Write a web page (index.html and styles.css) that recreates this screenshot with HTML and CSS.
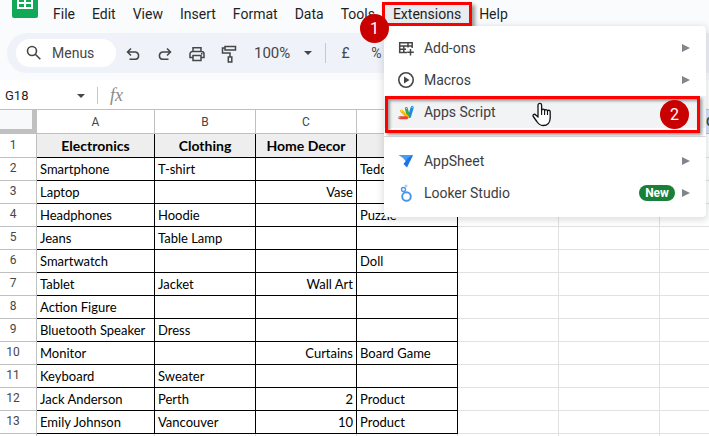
FILE: index.html
```html
<!DOCTYPE html>
<html lang="en">
<head>
  <meta charset="UTF-8">
  <meta name="viewport" content="width=device-width, initial-scale=1.0">
  <title>Spreadsheet</title>
  <link rel="stylesheet" href="styles.css">
</head>
<body>
  <header class="header">
    <div class="top-row">
      <svg class="logo" width="26" height="18" viewBox="0 0 26 18">
        <path fill="#0fa958" d="M0 0h26v16a2 2 0 0 1-2 2H2a2 2 0 0 1-2-2z"/>
        <path fill="#fff" d="M5 0h16v9H5z"/>
        <path fill="#0fa958" d="M7 0h5v2H7zM14 0h5v2h-5zM7 4h5v3H7zM14 4h5v3h-5z"/>
      </svg>
      <nav class="menubar">
        <button>File</button>
        <button>Edit</button>
        <button>View</button>
        <button>Insert</button>
        <button>Format</button>
        <button>Data</button>
        <button>Tools</button>
        <div class="menu-holder">
          <button class="active">Extensions</button>
          <span class="step step-one">1</span>
          <div class="dropdown">
            <button class="item">
              <svg width="18" height="18" viewBox="0 0 18 18" fill="none" stroke="#444746" stroke-width="1.500">
                <path d="M10 13.500H2.700V3.700h12.500V9M2.700 7h12.500M2.700 10.200H9M6.800 7v6.500M11 3.700V8.500M13.500 10v6.500M10.200 13.300h6.600"/>
              </svg>
              <span class="label">Add-ons</span>
              <span class="arrow"></span>
            </button>
            <button class="item">
              <svg width="18" height="18" viewBox="0 0 18 18">
                <circle cx="9" cy="9" r="7.200" fill="none" stroke="#444746" stroke-width="1.600"/>
                <path fill="#444746" d="M7 5.500v7L12.500 9z"/>
              </svg>
              <span class="label">Macros</span>
              <span class="arrow"></span>
            </button>
            <button class="item selected">
              <svg width="18" height="18" viewBox="0 0 18 18" fill="none" stroke-linecap="round" stroke-width="3">
                <path stroke="#1e88e5" d="M12.500 13.500l2.700-9"/>
                <path stroke="#34a853" d="M11.500 13.500L9.300 5.500"/>
                <path stroke="#fbbc04" d="M10.500 14L4.500 8"/>
                <path stroke="#ea4335" d="M9.500 14.700H2.800"/>
                <path stroke="#fff" stroke-width="1" d="M15.200 4.500v0M9.300 5.500v0M4.500 8v0M2.800 14.700v0"/>
              </svg>
              <span class="label">Apps Script</span>
              <span class="step step-two">2</span>
              <svg class="cursor" width="20" height="25" viewBox="0 0 20 25">
                <path fill="#fff" stroke="#111" stroke-width="1.300" stroke-linejoin="round" d="M6 15V3.200a1.800 1.800 0 0 1 3.600 0V8.500c0-1.800 3-1.800 3 .3 0-1.700 2.900-1.600 2.900.4 0-1.400 2.700-1.300 2.700.6V16c0 4.500-2.700 7.500-7 7.500-3.500 0-5-1.500-6.700-4.500L1.300 14.500c-1-1.800 1-3 2.500-1.500z"/>
                <path fill="none" stroke="#111" stroke-width="1.100" d="M9.600 8v5M12.600 8.500V13M15.500 9v4"/>
              </svg>
            </button>
            <hr>
            <button class="item">
              <svg width="18" height="18" viewBox="0 0 18 18">
                <path fill="#4a9bf0" d="M1.500 3h14.500l-3 6H8.500L6 6z"/>
                <path fill="#1a73e8" d="M16 3l-6 12.500L6.500 12 11 6z"/>
              </svg>
              <span class="label">AppSheet</span>
              <span class="arrow"></span>
            </button>
            <button class="item">
              <svg width="18" height="18" viewBox="0 0 18 18" fill="none" stroke="#4794ec">
                <circle cx="9.500" cy="12.500" r="4.300" stroke-width="1.900"/>
                <circle cx="6.500" cy="5.500" r="2" stroke-width="1.300"/>
                <circle cx="9" cy="2" r="1" stroke="#8fc1f7"/>
              </svg>
              <span class="label">Looker Studio</span>
              <span class="new">New</span>
              <span class="arrow"></span>
            </button>
          </div>
        </div>
        <button>Help</button>
      </nav>
    </div>
    <div class="toolbar">
      <button class="search">
        <svg width="16" height="16" viewBox="0 0 16 16" fill="none" stroke="#444746" stroke-width="1.600">
          <circle cx="6" cy="6" r="4.500"/>
          <path d="M9.300 9.300l5 5"/>
        </svg>
        Menus
      </button>
      <div class="tools">
        <button aria-label="Undo">
          <svg width="16" height="16" viewBox="0 0 16 16" fill="none" stroke="#444746" stroke-width="1.500">
            <path d="M3 6h7.500a3.700 3.700 0 0 1 0 7.300H4.500M6 2.500L2.500 6 6 9.500"/>
          </svg>
        </button>
        <button aria-label="Redo">
          <svg width="16" height="16" viewBox="0 0 16 16" fill="none" stroke="#444746" stroke-width="1.500">
            <path d="M13 6H5.500a3.700 3.700 0 0 0 0 7.300h6M10 2.500L13.500 6 10 9.500"/>
          </svg>
        </button>
        <button aria-label="Print">
          <svg width="16" height="16" viewBox="0 0 16 16" fill="none" stroke="#444746" stroke-width="1.500">
            <path d="M4 5V1.700h8V5M4 11.500H1V8a2.500 2.500 0 0 1 2.500-2.500h9A2.500 2.500 0 0 1 15 8v3.500h-3M4 9.500h8v5H4zM12 7.700h1.500"/>
          </svg>
        </button>
        <button aria-label="Paint format">
          <svg width="16" height="18" viewBox="0 0 16 18" fill="none" stroke="#444746" stroke-width="1.500">
            <path d="M4 1.500h10.500v3.500H4zM4 3H1.500v5h7.500v4M7.300 12h3.500v5H7.300z"/>
          </svg>
        </button>
      </div>
      <button class="zoom">100% <span class="caret"></span></button>
      <span class="divider"></span>
      <button class="format">£</button>
      <button class="format">%</button>
    </div>
  </header>

  <div class="formula-bar">
    <button class="cell-name">G18 <span class="caret"></span></button>
    <span class="divider"></span>
    <span class="fx">fx</span>
  </div>

  <main class="sheet">
    <table>
      <colgroup>
        <col class="col-num">
        <col class="col-a">
        <col span="6">
      </colgroup>
      <thead>
        <tr><th class="corner"></th><th>A</th><th>B</th><th>C</th><th>D</th><th>E</th><th>F</th><th class="current">G</th></tr>
      </thead>
      <tbody>
        <tr class="titles"><th>1</th><td>Electronics</td><td>Clothing</td><td>Home Decor</td><td>Toys</td><td></td><td></td><td></td></tr>
        <tr><th>2</th><td>Smartphone</td><td>T-shirt</td><td></td><td>Teddy Bear</td><td></td><td></td><td></td></tr>
        <tr><th>3</th><td>Laptop</td><td></td><td>Vase</td><td></td><td></td><td></td><td></td></tr>
        <tr><th>4</th><td>Headphones</td><td>Hoodie</td><td></td><td>Puzzle</td><td></td><td></td><td></td></tr>
        <tr><th>5</th><td>Jeans</td><td>Table Lamp</td><td></td><td></td><td></td><td></td><td></td></tr>
        <tr><th>6</th><td>Smartwatch</td><td></td><td></td><td>Doll</td><td></td><td></td><td></td></tr>
        <tr><th>7</th><td>Tablet</td><td>Jacket</td><td>Wall Art</td><td></td><td></td><td></td><td></td></tr>
        <tr><th>8</th><td>Action Figure</td><td></td><td></td><td></td><td></td><td></td><td></td></tr>
        <tr><th>9</th><td>Bluetooth Speaker</td><td>Dress</td><td></td><td></td><td></td><td></td><td></td></tr>
        <tr><th>10</th><td>Monitor</td><td></td><td>Curtains</td><td>Board Game</td><td></td><td></td><td></td></tr>
        <tr><th>11</th><td>Keyboard</td><td>Sweater</td><td></td><td></td><td></td><td></td><td></td></tr>
        <tr><th>12</th><td>Jack Anderson</td><td>Perth</td><td>2</td><td>Product</td><td></td><td></td><td></td></tr>
        <tr><th>13</th><td>Emily Johnson</td><td>Vancouver</td><td>10</td><td>Product</td><td></td><td></td><td></td></tr>
        <tr class="blank"><th></th><td></td><td></td><td></td><td></td><td></td><td></td><td></td></tr>
      </tbody>
    </table>
  </main>
</body>
</html>
```
FILE: styles.css
```css
* {
  box-sizing: border-box;
}
body {
  margin: 0;
  height: 100vh;
  overflow: hidden;
  font-family: Roboto, "Liberation Sans", sans-serif;
  font-size: 14px;
  color: #1f1f1f;
  background-color: #fff;
}
button {
  padding: 0;
  border: none;
  background: none;
  font: inherit;
  color: inherit;
  cursor: pointer;
}

/* header */
.header {
  background-color: #f9fbfd;
  padding-bottom: 7px;
}
.top-row {
  display: flex;
  align-items: flex-start;
  height: 33px;
  padding-left: 12px;
}
.menubar {
  display: flex;
  align-items: center;
  gap: 1px;
  margin-left: 7px;
  padding-top: 4px;
}
.menubar > button,
.menu-holder > button {
  height: 20px;
  padding: 0 8px;
}
.menu-holder {
  position: relative;
}
.menu-holder > .active {
  padding: 0 9px;
  background-color: #e9ebee;
  outline: 3px solid #f00;
  outline-offset: -1px;
  box-shadow: 3px 3px 4px 2px #999;
}
.step {
  position: absolute;
  z-index: 3;
  width: 29px;
  height: 29px;
  border-radius: 50%;
  background-color: #c80000;
  color: #fff;
  font-size: 16px;
  line-height: 29px;
  text-align: center;
}
.step-one {
  top: 10px;
  left: -24px;
}
.step-two {
  top: 4px;
  right: 17px;
}

/* toolbar */
.toolbar {
  display: flex;
  align-items: center;
  height: 40px;
  margin-left: 7px;
  padding-left: 9px;
  border-radius: 20px 0 0 20px;
  background-color: #eff2f8;
  color: #444746;
}
.search {
  display: flex;
  align-items: center;
  gap: 10px;
  width: 100px;
  height: 28px;
  padding-left: 10px;
  border-radius: 14px;
  background-color: #fff;
}
.tools {
  display: flex;
  gap: 16px;
  margin: 2px 17px 0 9px;
}
.tools button {
  display: flex;
  align-items: center;
}
.zoom,
.cell-name {
  display: flex;
  align-items: center;
  justify-content: space-between;
}
.zoom {
  width: 58px;
  font-size: 15px;
}
.caret {
  border: 4px solid transparent;
  border-top-color: #444746;
  border-bottom: none;
}
.divider {
  width: 1px;
  height: 20px;
  margin: 0 13px;
  background-color: #c7c7c7;
}
.format {
  width: 13px;
  margin-right: 18px;
}

/* formula bar */
.formula-bar {
  display: flex;
  align-items: center;
  height: 30px;
  padding: 2px 0 0 5px;
  border-bottom: 1px solid #c0c0c0;
}
.cell-name {
  width: 80px;
  font-size: 13px;
}
.formula-bar .divider {
  height: 17px;
  margin: 0 12px;
}
.fx {
  font-family: "Liberation Serif", serif;
  font-size: 18px;
  font-style: italic;
  color: #8a8a8a;
}

/* extensions menu */
.dropdown {
  position: absolute;
  z-index: 2;
  top: 22px;
  left: 0;
  width: 322px;
  padding: 6px 0 8px;
  border-radius: 4px;
  background-color: #fff;
  box-shadow: 0 2px 6px 2px rgba(60, 64, 67, 0.15);
}
.item {
  position: relative;
  display: flex;
  align-items: center;
  width: 100%;
  height: 32px;
  padding: 0 16px 0 13px;
  text-align: left;
  color: #3c4043;
}
.label {
  flex: 1;
  margin-left: 9px;
}
.item.selected {
  background-color: #f1f3f4;
}
.item.selected::after {
  content: "";
  position: absolute;
  inset: 0 6px -5px 1px;
  border: 3px solid #f00;
  box-shadow: 2px 2px 3px #999, inset 2px 2px 3px #999;
}
.cursor {
  position: absolute;
  top: 6px;
  left: 148px;
}
.arrow {
  border: 4px solid transparent;
  border-left: 8px solid #80868b;
  border-right: none;
}
.new {
  height: 16px;
  margin-right: 7px;
  padding: 0 6px;
  border-radius: 8px;
  background-color: #188038;
  color: #fff;
  font-size: 12px;
  font-weight: bold;
  line-height: 16px;
}
.dropdown hr {
  height: 1px;
  margin: 8px 0;
  border: none;
  background-color: #dadce0;
}

/* grid */
.sheet {
  overflow: hidden;
}
table {
  width: 761px;
  table-layout: fixed;
  border-collapse: separate;
  border-spacing: 0;
}
.col-num {
  width: 37px;
}
.col-a {
  width: 118px;
}
th {
  padding: 0;
  border-right: 1px solid #c0c0c0;
  border-bottom: 1px solid #c0c0c0;
  font-size: 12px;
  font-weight: normal;
  color: #444746;
}
thead th {
  height: 24px;
}
thead .corner {
  border-right: 5px solid #c0c0c0;
  border-bottom: 5px solid #c0c0c0;
  background-color: #f8f9fa;
}
thead .current {
  background-color: #d3e3fd;
  font-weight: bold;
}
tbody th {
  padding: 0 10px 2px 0;
}
td {
  height: 23px;
  padding: 0 3px;
  border-right: 1px solid #e1e1e1;
  border-bottom: 1px solid #e1e1e1;
  font-family: Lato, sans-serif;
  font-size: 13px;
  line-height: 20px;
  white-space: nowrap;
  color: #000;
}
td:nth-child(-n+5) {
  border-color: #000;
}
td:nth-child(4) {
  text-align: right;
}
.titles td {
  height: 24px;
  font-size: 14px;
  font-weight: bold;
  text-align: center;
}
.titles td:nth-child(-n+5) {
  background-color: #eee;
}
.blank td:nth-child(n) {
  border-color: #e1e1e1;
}
```
